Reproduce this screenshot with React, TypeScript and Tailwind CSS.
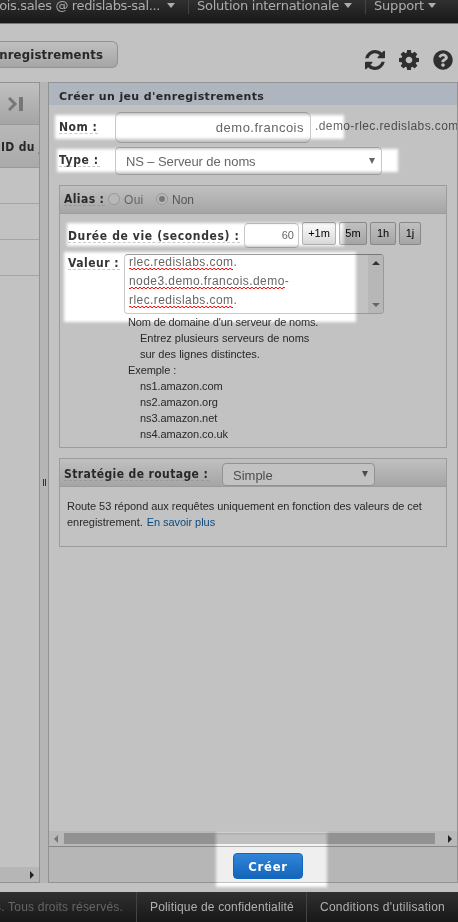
import React from "react";
import { FaQuestionCircle } from "react-icons/fa";

const dejavu = "font-['DejaVu_Sans',sans-serif]";
const condensed = "font-['DejaVu_Sans_Condensed','DejaVu_Sans',sans-serif]";
const head = "bg-linear-to-b from-[#c0c0c0] to-[#a5a5a5]";

function RefreshIcon() {
  return (
    <svg width="20" height="20" viewBox="0 128 1536 1536" fill="currentColor">
      <path d="M1511 1056q0 5-1 7-64 268-268 434.5t-478 166.5q-146 0-282.5-55t-243.5-157l-129 129q-19 19-45 19t-45-19-19-45v-448q0-26 19-45t45-19h448q26 0 45 19t19 45-19 45l-137 137q71 66 161 102t187 36q134 0 250-65t186-179q11-17 53-117 8-23 30-23h192q13 0 22.5 9.5t9.5 22.5zm25-800v448q0 26-19 45t-45 19h-448q-26 0-45-19t-19-45 19-45l138-138q-148-137-349-137-134 0-250 65t-186 179q-11 17-53 117-8 23-30 23h-199q-13 0-22.5-9.5t-9.5-22.5v-7q65-268 270-434.5t480-166.5q146 0 284 55.5t245 156.5l130-129q19-19 45-19t45 19 19 45z" />
    </svg>
  );
}

function CogIcon() {
  return (
    <svg width="20" height="20" viewBox="128 128 1536 1536" fill="currentColor">
      <path d="M1152 896q0-106-75-181t-181-75-181 75-75 181 75 181 181 75 181-75 75-181zm512-109v222q0 12-8 23t-20 13l-185 28q-19 54-39 91 35 50 107 138 10 12 10 25t-9 23q-27 37-99 108t-94 71q-12 0-26-9l-138-108q-44 23-91 38-16 136-29 186-7 28-36 28h-222q-14 0-24.5-8.5t-11.5-21.5l-28-184q-49-16-90-37l-141 107q-10 9-25 9-14 0-25-11-126-114-165-168-7-10-7-23 0-12 8-23 15-21 51-66.5t54-70.5q-27-50-41-99l-183-27q-13-2-21-12.5t-8-23.5v-222q0-12 8-23t19-13l186-28q14-46 39-92-40-57-107-138-10-12-10-24 0-10 9-23 26-36 98.5-107.5t94.5-71.5q13 0 26 10l138 107q44-23 91-38 16-136 29-186 7-28 36-28h222q14 0 24.5 8.5t11.5 21.5l28 184q49 16 90 37l142-107q9-9 24-9 13 0 25 10 129 119 165 170 7 8 7 22 0 12-8 23-15 21-51 66.5t-54 70.5q26 50 41 98l183 28q13 2 21 12.5t8 23.5z" />
    </svg>
  );
}

function Label({ children, className = "" }: { children: React.ReactNode; className?: string }) {
  return (
    <span
      className={`${condensed} shrink-0 self-start border-b border-dashed border-[#999] text-[12px] font-bold whitespace-nowrap text-[#282828] ${className}`}
    >
      {children}
    </span>
  );
}

function Caret({ className = "" }: { className?: string }) {
  return (
    <svg className={`shrink-0 ${className}`} width="8" height="5" viewBox="0 0 8 5">
      <path d="M0 0h8L4 5z" fill="currentColor" />
    </svg>
  );
}

function Arrow({ d, className = "" }: { d: string; className?: string }) {
  return (
    <svg className={`shrink-0 ${className}`} width="8" height="8" viewBox="0 0 8 8">
      <path d={d} fill="currentColor" />
    </svg>
  );
}

function Misspelt({ children }: { children: React.ReactNode }) {
  return (
    <span className="bg-[repeating-conic-gradient(#c20000_0_25%,transparent_0_50%)] bg-bottom bg-repeat-x pb-px [background-size:4px_2px]">
      {children}
    </span>
  );
}

function Spot({ className }: { className: string }) {
  return (
    <div className={`pointer-events-none absolute bg-[#3d3d3d] mix-blend-color-dodge blur-[1.5px] ${className}`} />
  );
}

function TopBar() {
  return (
    <header className={`${dejavu} flex h-6 shrink-0 border-b border-[#777] bg-linear-to-b from-[#303030] to-[#181818] text-[13px] leading-[13px] whitespace-nowrap text-[#adadad]`}>
      <div className="flex h-3.5 w-[189px] shrink-0 justify-end border-r border-[#444] pr-[13px]">
        <span className="-mt-px tracking-[-0.35px]">ois.sales @ redislabs-sal...</span>
        <Caret className="mt-[3px] ml-[7px]" />
      </div>
      <div className="flex h-3.5 w-[177px] shrink-0 border-r border-[#444] pl-2">
        <span className="-mt-px w-[147px] shrink-0 tracking-[-0.25px]">Solution internationale</span>
        <Caret className="mt-[3px]" />
      </div>
      <div className="flex h-3.5 pl-2">
        <span className="-mt-px w-[54px] shrink-0 tracking-[-0.2px]">Support</span>
        <Caret className="mt-[3px]" />
      </div>
    </header>
  );
}

function RecordPanel() {
  return (
    <section className="mt-[10px] ml-[10px] h-[263px] w-[388px] shrink-0 border border-[#9c9c9c]">
      <div className={`flex h-7 border-b border-[#9c9c9c] pl-1 ${head}`}>
        <Label className="mt-[8px] w-[41px] leading-[11px] tracking-[0.4px]">Alias :</Label>
        <div className="mt-[7px] ml-[3px] size-3 shrink-0 rounded-full border border-[#999] bg-[#b8b8b8]" />
        <span className="mt-[6px] ml-[4px] w-8 text-[12px] leading-4 tracking-[0.3px] text-[#666]">Oui</span>
        <div className="mt-[7px] flex size-3 shrink-0 items-center justify-center rounded-full border border-[#999] bg-[#b8b8b8]">
          <div className="size-1.5 rounded-full bg-[#777]" />
        </div>
        <span className="mt-[6px] ml-[4px] text-[12px] leading-4 text-[#555]">Non</span>
      </div>
      <div className="mt-2 flex h-[26px] pl-2">
        <Label className="mt-[9px] w-[172px] leading-[11px] tracking-[0.63px]">Durée de vie (secondes) :</Label>
        <div className="mt-px ml-1 h-[25px] w-[55px] rounded border border-[#999] bg-[#c2c2c2] pr-1 text-right text-[11px] leading-[23px] text-[#4d4d4d]">60</div>
        <div className="ml-[3px] flex gap-[3px] text-[11px] leading-[21px] text-black">
          <div className={`h-[23px] w-[34px] rounded-xs border border-[#888] text-center ${head}`}>+1m</div>
          <div className={`h-[23px] w-7 rounded-xs border border-[#888] text-center ${head}`}>5m</div>
          <div className={`h-[23px] w-[26px] rounded-xs border border-[#888] text-center ${head}`}>1h</div>
          <div className={`h-[23px] w-[22px] rounded-xs border border-[#888] text-center ${head}`}>1j</div>
        </div>
      </div>
      <div className="mt-[6px] flex h-[60px] pl-2">
        <Label className="mt-[4px] w-[52px] leading-[11px] tracking-[0.5px]">Valeur :</Label>
        <div className="ml-1 flex h-[60px] w-[260px] overflow-hidden rounded border border-[#999] border-t-[#777] bg-[#c2c2c2]">
          <div className="-mt-[2px] w-[243px] pl-1 text-[12px] leading-[19px] tracking-[0.43px] whitespace-nowrap text-[#4d4d4d]">
            <p><Misspelt>rlec.redislabs.com</Misspelt>.</p>
            <p><Misspelt>node3.demo.francois.demo</Misspelt>-</p>
            <p><Misspelt>rlec.redislabs.com</Misspelt>.</p>
          </div>
          <div className="flex flex-1 flex-col items-center justify-between bg-[#b7b7b7] py-[4px]">
            <Arrow d="M0 6h8L4 2z" className="text-[#333]" />
            <Arrow d="M0 2h8L4 6z" className="text-[#666]" />
          </div>
        </div>
      </div>
      <div className="pl-[68px] text-[11px] leading-4 tracking-[-0.08px] whitespace-nowrap text-[#282828]">
        <p className="tracking-[-0.14px]">Nom de domaine d'un serveur de noms.</p>
        <div className="pl-3">
          <p className="tracking-normal">Entrez plusieurs serveurs de noms</p>
          <p className="tracking-normal">sur des lignes distinctes.</p>
        </div>
        <p>Exemple :</p>
        <div className="pl-3">
          <p>ns1.amazon.com</p>
          <p>ns2.amazon.org</p>
          <p>ns3.amazon.net</p>
          <p>ns4.amazon.co.uk</p>
        </div>
      </div>
    </section>
  );
}

function RoutingPanel() {
  return (
    <section className="mt-[10px] ml-[10px] h-[89px] w-[388px] shrink-0 border border-[#9c9c9c]">
      <div className={`flex h-7 border-b border-[#9c9c9c] pl-1 ${head}`}>
        <Label className="mt-[9px] w-[145px] leading-[12px] tracking-[0.4px]">Stratégie de routage :</Label>
        <div className="mt-1 ml-[13px] flex h-[23px] w-[153px] justify-between rounded border border-[#929292] bg-[#c2c2c2] pr-[5px] pl-[10px] text-[13px] leading-6 text-[#4d4d4d]">
          Simple
          <Arrow d="M1 1h6L4 7z" className="mt-[6px]" />
        </div>
      </div>
      <p className="mt-[11px] pl-[7px] text-[11px] leading-4 tracking-[-0.05px] whitespace-nowrap text-[#282828]">
        Route 53 répond aux requêtes uniquement en fonction des valeurs de cet<br />
        enregistrement. <span className="ml-px text-[#0c4a80]">En savoir plus</span>
      </p>
    </section>
  );
}

export default function App() {
  return (
    <div className="relative isolate flex h-[922px] w-[458px] flex-col overflow-hidden bg-[#c2c2c2] font-['Liberation_Sans',sans-serif]">
      <TopBar />
      <div className="flex h-[58px] shrink-0 justify-between">
        <div className={`${condensed} mt-[17px] flex h-[27px] w-[118px] justify-end rounded-r-md border border-l-0 border-[#929292] pr-[14px] text-[13px] leading-[25px] font-bold tracking-[0.15px] whitespace-nowrap text-[#282828] ${head}`}>
          nregistrements
        </div>
        <div className="mt-[26px] mr-[5px] flex gap-[14px] text-[20px] text-[#2f2f2f]">
          <RefreshIcon />
          <CogIcon />
          <FaQuestionCircle />
        </div>
      </div>

      <main className="flex h-[801px] shrink-0">
        <aside className="flex w-10 flex-col border-t border-r border-b border-[#929292]">
          <div className={`flex h-[42px] items-center border-b border-[#999] pl-2 ${head}`}>
            <svg width="16" height="14" viewBox="0 0 16 14" fill="none" stroke="#777">
              <path d="M1 1l6 6-6 6" strokeWidth="3" />
              <path d="M13 0v14" strokeWidth="4" />
            </svg>
          </div>
          <div className={`${condensed} flex h-[43px] items-center overflow-hidden border-b border-[#999] bg-linear-to-b from-[#b8b8b8] to-[#aaa] pt-px pl-px text-[12px] font-bold tracking-[0.35px] whitespace-nowrap text-[#282828]`}>
            ID du j
          </div>
          <div className="h-9 border-b border-[#a5a5a5]" />
          <div className="h-9 border-b border-[#a5a5a5]" />
          <div className="h-9 border-b border-[#a5a5a5]" />
          <div className="flex-1" />
          <div className="flex h-[15px] items-center justify-end bg-[#b6b6b6] pr-[3px]">
            <Arrow d="M2 0v8l4-4z" className="text-[#222]" />
          </div>
        </aside>
        <div className="flex w-2 items-center justify-center gap-[1px] bg-[#b5b5b5]">
          <i className="h-[7px] w-px bg-[#333]" />
          <i className="h-[7px] w-px bg-[#333]" />
        </div>
        <section className="flex w-[410px] flex-col overflow-hidden border border-[#929292]">
          <h1 className={`${dejavu} h-[22px] shrink-0 bg-[#aeb5bf] pl-[10px] text-[11px] leading-[27px] font-bold tracking-[0.36px] whitespace-nowrap text-[#282828]`}>
            Créer un jeu d'enregistrements
          </h1>
          <div className="mt-[7px] flex h-[31px] shrink-0 pl-[10px]">
            <Label className="mt-[9px] w-[39px] leading-[12px] tracking-[0.5px]">Nom :</Label>
            <div className="ml-[17px] h-[31px] w-[196px] shrink-0 rounded-md border border-[#999] pr-[6px] text-right text-[13px] leading-[30px] tracking-[0.5px] text-[#4d4d4d]">demo.francois</div>
            <span className="ml-1 text-[12px] leading-[29px] tracking-[0.4px] whitespace-nowrap text-[#4d4d4d]">.demo-rlec.redislabs.com</span>
          </div>
          <div className="mt-1 flex h-7 shrink-0 pl-[10px]">
            <Label className="mt-[8px] w-[41px] leading-[11px] tracking-[0.6px]">Type :</Label>
            <div className="ml-[15px] flex h-7 w-[267px] justify-between rounded border border-[#999] pr-[5px] pl-[10px] text-[13px] leading-[27px] tracking-[-0.1px] text-[#4d4d4d]">
              NS – Serveur de noms
              <Arrow d="M1 1h6L4 7z" className="mt-[9px]" />
            </div>
          </div>
          <RecordPanel />
          <RoutingPanel />
          <div className="flex-1" />
          <div className="flex h-[15px] shrink-0 items-center bg-[#b9b9b9] px-[3px]">
            <Arrow d="M6 0v8L2 4z" className="text-[#777]" />
            <div className="mr-[11px] ml-1 h-[11px] flex-1 bg-[#929292]" />
            <Arrow d="M2 0v8l4-4z" className="text-[#222]" />
          </div>
          <div className="flex h-9 shrink-0 border-t border-[#868686] bg-[#b6b6b6]">
            <button className={`${condensed} mt-[6px] ml-[184px] h-[26px] w-[70px] rounded border border-[#0d4e91] bg-linear-to-b from-[#2565a5] to-[#0e4d8d] text-[13px] leading-[25px] font-bold tracking-[0.7px] text-[#c2c2c2]`}>
              Créer
            </button>
          </div>
        </section>
      </main>

      <footer className="mt-[9px] flex h-[30px] shrink-0 bg-linear-to-b from-[#303030] to-[#181818] text-[12px] leading-[30px] tracking-[0.2px] whitespace-nowrap text-[#b0b0b0]">
        <div className="flex w-[137px] justify-end border-r border-[#444] pr-[13px] text-[#666]">s. Tous droits réservés.</div>
        <div className="w-[170px] border-r border-[#444] pl-[13px] tracking-[0.16px]">Politique de confidentialité</div>
        <div className="pl-[13px] tracking-[0.25px]">Conditions d'utilisation</div>
      </footer>

      <Spot className="top-[115px] left-[55px] h-[24px] w-[289px]" />
      <Spot className="top-[149px] left-[57px] h-[23px] w-[341px]" />
      <Spot className="top-[223px] left-[67px] h-[23px] w-[277px]" />
      <Spot className="top-[252px] left-[64px] h-[70px] w-[292px]" />
      <Spot className="top-[833px] left-[216px] h-[54px] w-[111px]" />
    </div>
  );
}
